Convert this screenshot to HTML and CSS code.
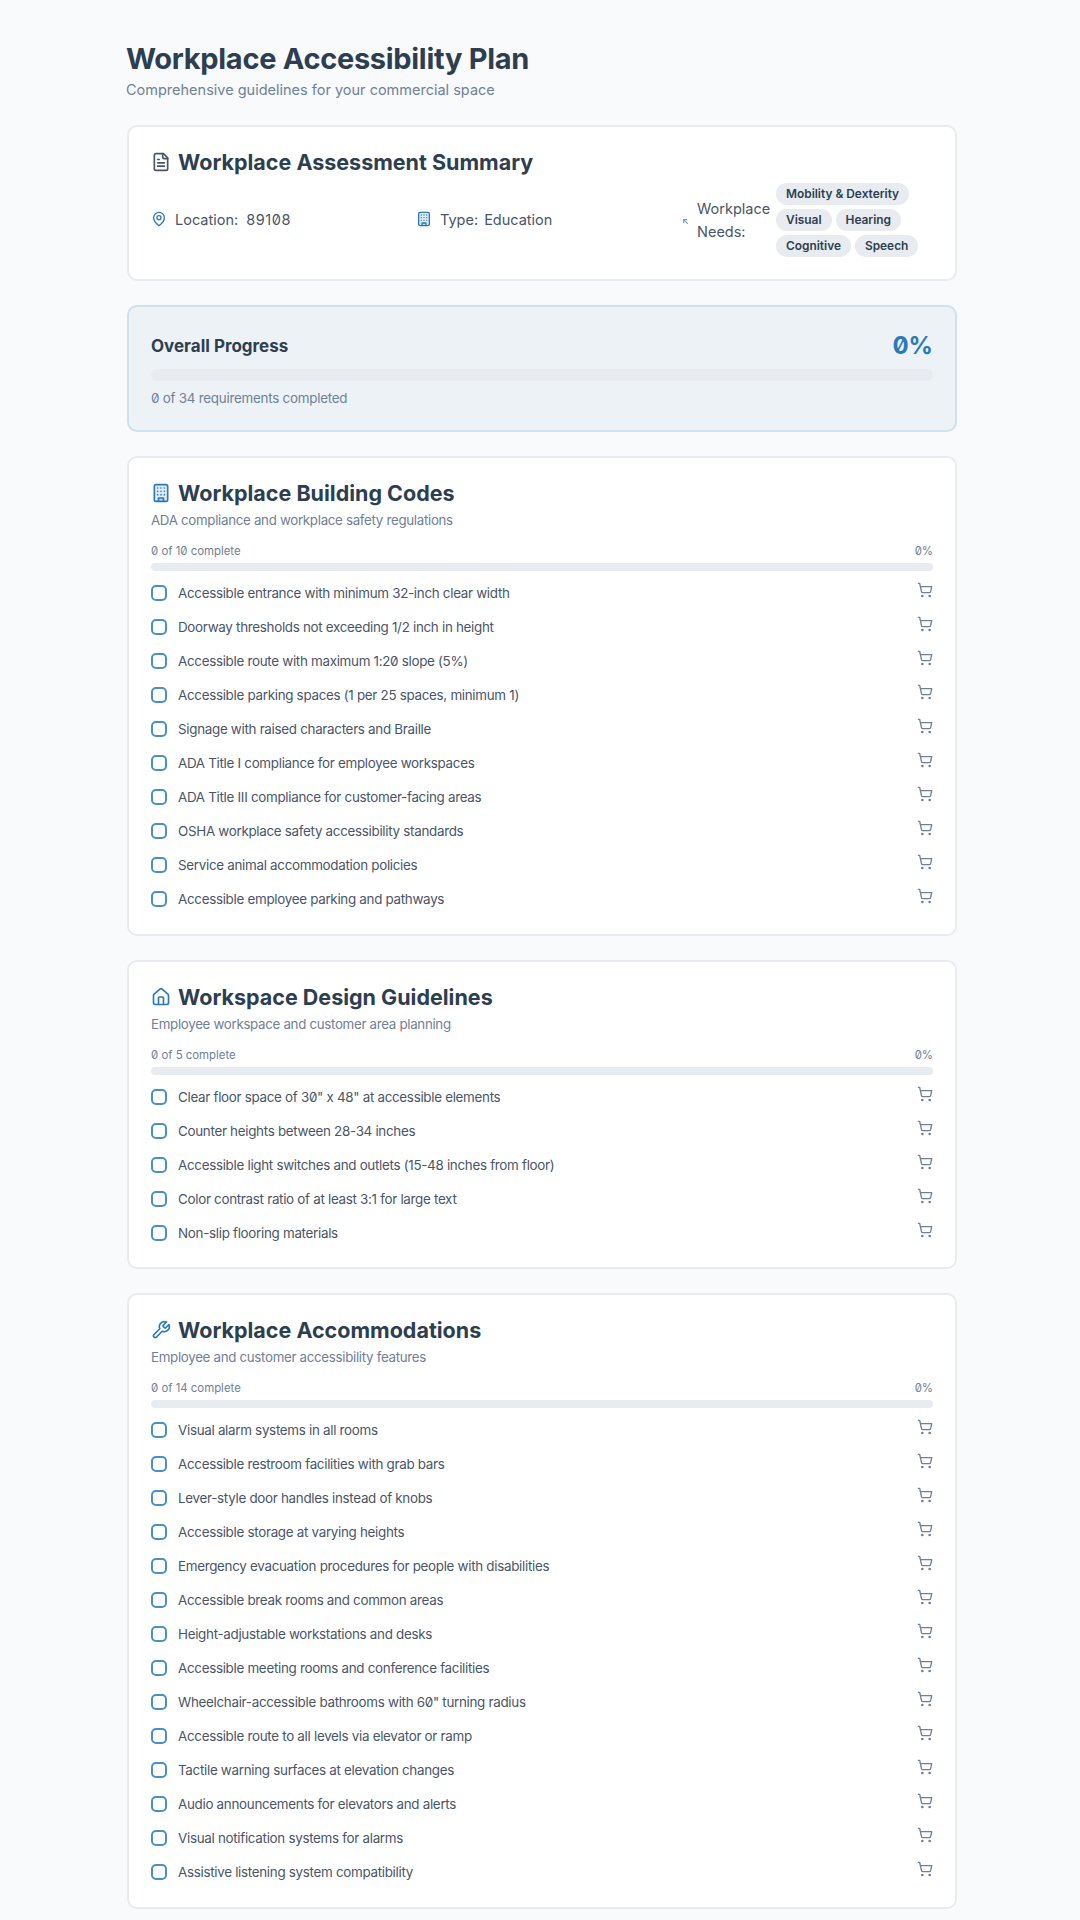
FILE: index.html
```html
<!DOCTYPE html>
<html lang="en">
<head>
<meta charset="utf-8">
<title>Workplace Accessibility Plan</title>
<link rel="stylesheet" href="styles.css">
</head>
<body>
<svg class="defs" aria-hidden="true">
<symbol id="cart" viewBox="0 0 24 24"><circle cx="8" cy="21" r="1"/><circle cx="19" cy="21" r="1"/><path d="M2.05 2.05h2l2.66 12.42a2 2 0 0 0 2 1.58h9.78a2 2 0 0 0 1.95-1.57l1.65-7.43H5.12"/></symbol>
</svg>
<main class="page">
<header class="head">
<h1>Workplace Accessibility Plan</h1>
<p>Comprehensive guidelines for your commercial space</p>
</header>

<section class="card summary">
<h2><svg class="ico dark" viewBox="0 0 24 24"><path d="M15 2H6a2 2 0 0 0-2 2v16a2 2 0 0 0 2 2h12a2 2 0 0 0 2-2V7Z"/><path d="M14 2v4a2 2 0 0 0 2 2h4"/><path d="M10 9H8"/><path d="M16 13H8"/><path d="M16 17H8"/></svg>Workplace Assessment Summary</h2>
<div class="facts">
<div class="fact plain"><svg class="ico-s" viewBox="0 0 24 24"><path d="M20 10c0 6-8 12-8 12s-8-6-8-12a8 8 0 0 1 16 0Z"/><circle cx="12" cy="10" r="3"/></svg><span>Location:</span><span class="zip">89108</span></div>
<div class="fact plain"><svg class="ico-s tint" viewBox="0 0 24 24"><rect x="4" y="2" width="16" height="20" rx="2"/><path d="M9 22v-4h6v4"/><path d="M8 6h.01M16 6h.01M12 6h.01M12 10h.01M12 14h.01M16 10h.01M16 14h.01M8 10h.01M8 14h.01"/></svg><span>Type:</span><span>Education</span></div>
<div class="fact needs"><svg class="ico-xs" viewBox="0 0 24 24"><path d="M17 17 7 7"/><path d="M7 15V7h8"/></svg><span class="needs-label">Workplace Needs:</span>
<div class="tags"><span>Mobility &amp; Dexterity</span><span>Visual</span><span>Hearing</span><span>Cognitive</span><span>Speech</span></div></div>
</div>
</section>

<section class="card overall">
<div class="overall-top"><h3>Overall Progress</h3><span class="big-pct">0%</span></div>
<div class="bar"></div>
<p class="overall-note">0 of 34 requirements completed</p>
</section>

<section class="card group">
<h2><svg class="ico tint" viewBox="0 0 24 24"><rect x="4" y="2" width="16" height="20" rx="2"/><path d="M9 22v-4h6v4"/><path d="M8 6h.01M16 6h.01M12 6h.01M12 10h.01M12 14h.01M16 10h.01M16 14h.01M8 10h.01M8 14h.01"/></svg>Workplace Building Codes</h2>
<p class="sub">ADA compliance and workplace safety regulations</p>
<div class="meter"><span>0 of 10 complete</span><span>0%</span></div>
<div class="bar thin"></div>
<ul>
<li><i class="box"></i><span>Accessible entrance with minimum 32-inch clear width</span><svg class="cart"><use href="#cart"/></svg></li>
<li><i class="box"></i><span>Doorway thresholds not exceeding 1/2 inch in height</span><svg class="cart"><use href="#cart"/></svg></li>
<li><i class="box"></i><span>Accessible route with maximum 1:20 slope (5%)</span><svg class="cart"><use href="#cart"/></svg></li>
<li><i class="box"></i><span>Accessible parking spaces (1 per 25 spaces, minimum 1)</span><svg class="cart"><use href="#cart"/></svg></li>
<li><i class="box"></i><span>Signage with raised characters and Braille</span><svg class="cart"><use href="#cart"/></svg></li>
<li><i class="box"></i><span>ADA Title I compliance for employee workspaces</span><svg class="cart"><use href="#cart"/></svg></li>
<li><i class="box"></i><span>ADA Title III compliance for customer-facing areas</span><svg class="cart"><use href="#cart"/></svg></li>
<li><i class="box"></i><span>OSHA workplace safety accessibility standards</span><svg class="cart"><use href="#cart"/></svg></li>
<li><i class="box"></i><span>Service animal accommodation policies</span><svg class="cart"><use href="#cart"/></svg></li>
<li><i class="box"></i><span>Accessible employee parking and pathways</span><svg class="cart"><use href="#cart"/></svg></li>
</ul>
</section>

<section class="card group">
<h2><svg class="ico" viewBox="0 0 24 24"><path d="M15 21v-8a1 1 0 0 0-1-1h-4a1 1 0 0 0-1 1v8"/><path d="M3 10a2 2 0 0 1 .709-1.528l7-5.999a2 2 0 0 1 2.582 0l7 5.999A2 2 0 0 1 21 10v9a2 2 0 0 1-2 2H5a2 2 0 0 1-2-2z"/></svg>Workspace Design Guidelines</h2>
<p class="sub">Employee workspace and customer area planning</p>
<div class="meter"><span>0 of 5 complete</span><span>0%</span></div>
<div class="bar thin"></div>
<ul>
<li><i class="box"></i><span>Clear floor space of 30" x 48" at accessible elements</span><svg class="cart"><use href="#cart"/></svg></li>
<li><i class="box"></i><span>Counter heights between 28-34 inches</span><svg class="cart"><use href="#cart"/></svg></li>
<li><i class="box"></i><span>Accessible light switches and outlets (15-48 inches from floor)</span><svg class="cart"><use href="#cart"/></svg></li>
<li><i class="box"></i><span>Color contrast ratio of at least 3:1 for large text</span><svg class="cart"><use href="#cart"/></svg></li>
<li><i class="box"></i><span>Non-slip flooring materials</span><svg class="cart"><use href="#cart"/></svg></li>
</ul>
</section>

<section class="card group">
<h2><svg class="ico" viewBox="0 0 24 24"><path d="M14.7 6.3a1 1 0 0 0 0 1.4l1.6 1.6a1 1 0 0 0 1.4 0l3.77-3.77a6 6 0 0 1-7.94 7.94l-6.91 6.91a2.12 2.12 0 0 1-3-3l6.91-6.91a6 6 0 0 1 7.94-7.94l-3.76 3.76z"/></svg>Workplace Accommodations</h2>
<p class="sub">Employee and customer accessibility features</p>
<div class="meter"><span>0 of 14 complete</span><span>0%</span></div>
<div class="bar thin"></div>
<ul>
<li><i class="box"></i><span>Visual alarm systems in all rooms</span><svg class="cart"><use href="#cart"/></svg></li>
<li><i class="box"></i><span>Accessible restroom facilities with grab bars</span><svg class="cart"><use href="#cart"/></svg></li>
<li><i class="box"></i><span>Lever-style door handles instead of knobs</span><svg class="cart"><use href="#cart"/></svg></li>
<li><i class="box"></i><span>Accessible storage at varying heights</span><svg class="cart"><use href="#cart"/></svg></li>
<li><i class="box"></i><span>Emergency evacuation procedures for people with disabilities</span><svg class="cart"><use href="#cart"/></svg></li>
<li><i class="box"></i><span>Accessible break rooms and common areas</span><svg class="cart"><use href="#cart"/></svg></li>
<li><i class="box"></i><span>Height-adjustable workstations and desks</span><svg class="cart"><use href="#cart"/></svg></li>
<li><i class="box"></i><span>Accessible meeting rooms and conference facilities</span><svg class="cart"><use href="#cart"/></svg></li>
<li><i class="box"></i><span>Wheelchair-accessible bathrooms with 60" turning radius</span><svg class="cart"><use href="#cart"/></svg></li>
<li><i class="box"></i><span>Accessible route to all levels via elevator or ramp</span><svg class="cart"><use href="#cart"/></svg></li>
<li><i class="box"></i><span>Tactile warning surfaces at elevation changes</span><svg class="cart"><use href="#cart"/></svg></li>
<li><i class="box"></i><span>Audio announcements for elevators and alerts</span><svg class="cart"><use href="#cart"/></svg></li>
<li><i class="box"></i><span>Visual notification systems for alarms</span><svg class="cart"><use href="#cart"/></svg></li>
<li><i class="box"></i><span>Assistive listening system compatibility</span><svg class="cart"><use href="#cart"/></svg></li>
</ul>
</section>
</main>
</body>
</html>
```
FILE: styles.css
```css
* { box-sizing: border-box; }
html, body { margin: 0; padding: 0; }
body {
  background: #f8fafc;
  color: #2d3e50;
  font-family: Inter, "Noto Sans", sans-serif;
  font-variant-numeric: slashed-zero;
  font-feature-settings: "zero" 1;
}
.defs { display: none; }
.page { width: 830px; margin-left: 127px; padding-top: 40px; padding-bottom: 12px; display: flex; flex-direction: column; gap: 24px; }
.head { margin-bottom: 1px; }
.head h1 { margin: 0 0 0 -1px; font-size: 29px; line-height: 38px; font-weight: 700; letter-spacing: -0.3px; color: #2d3e50; }
.head p { margin: 2px 0 0 -1px; font-size: 14.5px; line-height: 20px; color: #718096; }
.card { background: #fff; border: 2px solid #e8ecf1; border-radius: 10px; padding: 20px 22px 17.5px; }
h2 { margin: 0; display: flex; align-items: center; gap: 7px; font-size: 21.5px; line-height: 30px; font-weight: 700; color: #2d3e50; }
svg { fill: none; stroke: currentColor; stroke-width: 2; stroke-linecap: round; stroke-linejoin: round; }
.ico { width: 20px; height: 20px; color: #2b7ab8; flex: none; }
.ico.dark { color: #4a5568; }
.ico-s { width: 16px; height: 16px; color: #2b7ab8; flex: none; }
.tint { fill: rgba(43, 122, 184, .14); }
.ico-xs { width: 9px; height: 9px; color: #2b7ab8; flex: none; opacity: .7; stroke-width: 3; margin-top: 2px; }
.summary { height: 155.5px; }
.facts { display: grid; grid-template-columns: 265px 265px 1fr; margin-top: 6px; align-items: center; }
.fact { display: flex; align-items: center; gap: 6px; font-size: 14.5px; line-height: 23px; color: #4a5568; }
.plain { margin-top: -2px; }
.fact .ico-s + span { margin-left: 2px; }
.zip { margin-left: 2px; letter-spacing: .6px; }
.needs { gap: 7px; }
.needs-label { width: 72px; }
.tags { display: flex; flex-wrap: wrap; gap: 4px; width: 152px; }
.tags span { background: #e8ecf1; border-radius: 999px; padding: 0 10px; font-size: 11.9px; line-height: 22px; font-weight: 600; color: #2d3e50; }
.overall { background: #edf2f7; border-color: #cfe0ee; height: 127.5px; padding: 25px 22px 0; }
.overall-top { display: flex; justify-content: space-between; align-items: center; }
h3 { margin: 0; font-size: 17px; line-height: 28px; font-weight: 700; color: #2d3e50; }
.big-pct { font-size: 24px; line-height: 28px; font-weight: 700; color: #2b7ab8; }
.bar { height: 12px; border-radius: 999px; background: #e8ecf1; margin-top: 9px; }
.bar.thin { height: 8px; margin-top: 4px; }
.overall-note { margin: 7px 0 0; font-size: 13.4px; line-height: 20px; letter-spacing: -.25px; color: #718096; }
.sub { margin: 2px 0 0; font-size: 13.3px; line-height: 20px; letter-spacing: -.3px; color: #718096; }
.meter { display: flex; justify-content: space-between; margin-top: 13px; font-size: 11.4px; line-height: 16px; color: #718096; }
ul { list-style: none; margin: 5px 0 0; padding: 0; display: flex; flex-direction: column; }
li { display: flex; align-items: center; height: 34px; font-size: 13.4px; letter-spacing: -.3px; color: #4a5568; gap: 11px; }
li span { flex: 1; }
.box { width: 16px; height: 16px; border: 2px solid #4a90c4; border-radius: 5px; flex: none; }
.cart { width: 16px; height: 16px; color: #718096; flex: none; margin-top: -6px; }
```
